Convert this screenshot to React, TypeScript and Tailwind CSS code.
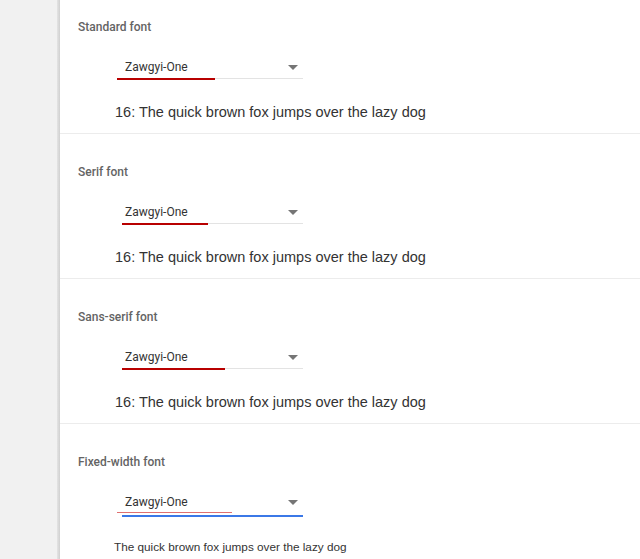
import React from 'react';

type Section = {
  label: string;
  sample: string;
  sampleClass: string;
  lineLeft: string;
  redWidth: string;
  focused?: boolean;
};

const sections: Section[] = [
  {
    label: 'Standard font',
    sample: '16: The quick brown fox jumps over the lazy dog',
    sampleClass: 'text-[14.5px] mt-[23px] ml-[37px]',
    lineLeft: 'left-[-7px]',
    redWidth: 'w-[98px]',
  },
  {
    label: 'Serif font',
    sample: '16: The quick brown fox jumps over the lazy dog',
    sampleClass: 'text-[14.5px] mt-[23px] ml-[37px]',
    lineLeft: 'left-[-2px]',
    redWidth: 'w-[86px]',
  },
  {
    label: 'Sans-serif font',
    sample: '16: The quick brown fox jumps over the lazy dog',
    sampleClass: 'text-[14.5px] mt-[23px] ml-[37px]',
    lineLeft: 'left-[-2px]',
    redWidth: 'w-[103px]',
  },
  {
    label: 'Fixed-width font',
    sample: 'The quick brown fox jumps over the lazy dog',
    sampleClass: 'text-[11.75px] mt-[23px] ml-[36px]',
    lineLeft: 'left-[-2px]',
    redWidth: 'w-[115px]',
    focused: true,
  },
];

function FontDropdown({ s }: { s: Section }) {
  return (
    <div className="relative w-[179px] h-[20px] ml-[46px] mt-[24px]">
      <div className="flex items-center justify-between h-4 pl-[1px] pr-[5px]">
        <span className="text-[12px] leading-4 text-[#333]">Zawgyi-One</span>
        <span className="w-0 h-0 border-l-[5px] border-r-[5px] border-t-[5px] border-l-transparent border-r-transparent border-t-[#757575]" />
      </div>
      {s.focused ? (
        <>
          <div className="absolute left-[-7px] top-[18px] w-[115px] h-px bg-[#e07070]" />
          <div className="absolute left-[-2px] top-[21px] w-[181px] h-[2px] bg-[#3b78e7]" />
        </>
      ) : (
        <>
          <div className={`absolute ${s.lineLeft} right-0 top-[19px] h-px bg-[#e3e3e3]`} />
          <div className={`absolute ${s.lineLeft} ${s.redWidth} top-[19px] h-[2px] bg-[#b80000]`} />
        </>
      )}
    </div>
  );
}

export default function App() {
  return (
    <div
      className="flex w-[640px] h-[559px] overflow-hidden bg-[#f1f1f1]"
      style={{ fontFamily: 'Roboto, "Liberation Sans", sans-serif' }}
    >
      <div className="w-[57px] shrink-0" />
      <div className="w-[3px] shrink-0 bg-gradient-to-r from-[#e4e4e4] to-[#d0d0d0]" />
      <div className="flex-1 bg-white flex flex-col mt-[-11px]">
        {sections.map((s) => (
          <div key={s.label} className="h-[145px] shrink-0 border-b border-[#ececec] pl-[18px]">
            <div className="pt-[30px] text-[12px] leading-4 font-medium text-[#646464]">{s.label}</div>
            <FontDropdown s={s} />
            <div
              className={`${s.sampleClass} leading-5 text-[#333]`}
              style={{ fontFamily: '"Liberation Sans", Arial, sans-serif' }}
            >
              {s.sample}
            </div>
          </div>
        ))}
      </div>
    </div>
  );
}
